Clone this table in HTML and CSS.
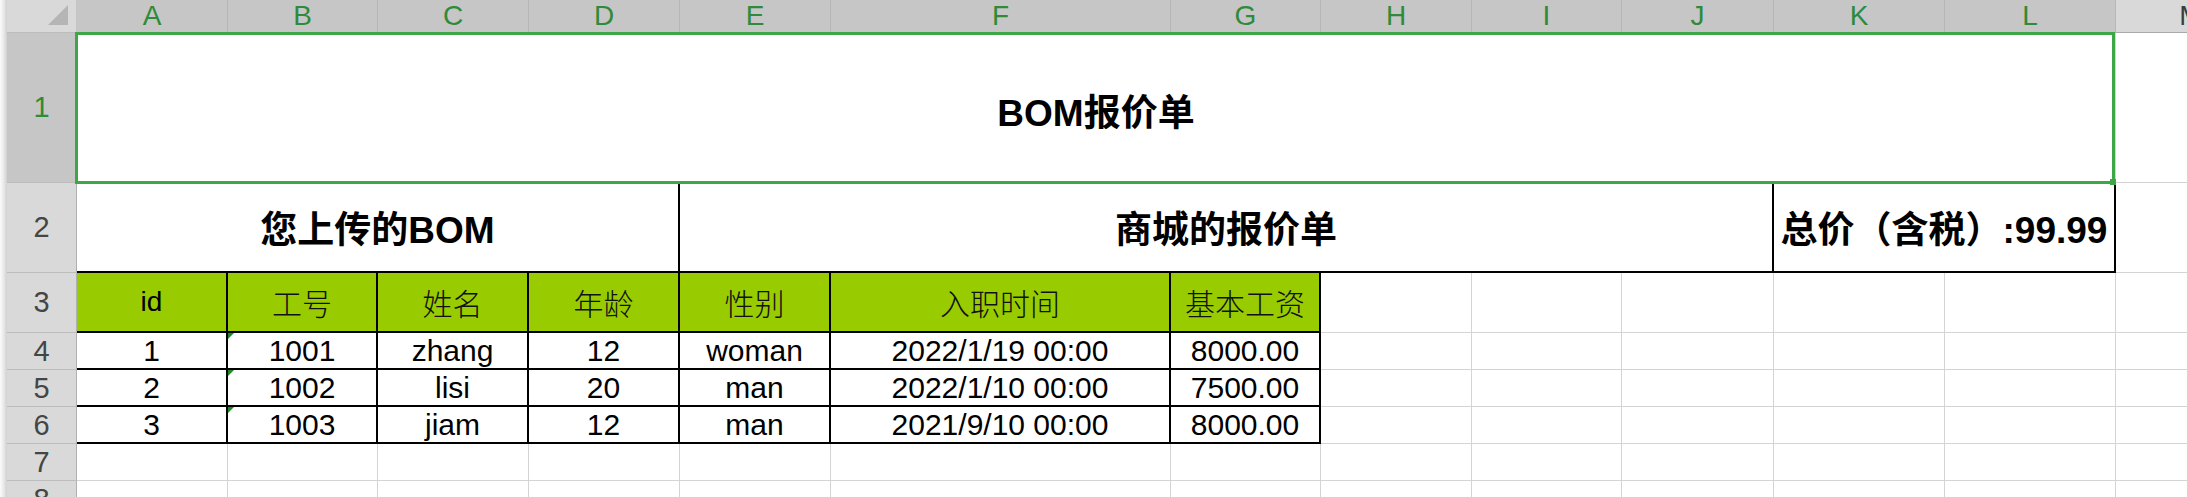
FILE: index.html
```html
<!DOCTYPE html>
<html lang="zh-CN">
<head>
<meta charset="utf-8">
<title>BOM报价单</title>
<link rel="stylesheet" href="styles.css">
</head>
<body>
<div class="sheet">
  <div class="strip"></div>
  <div class="corner"><svg class="tri" width="20" height="20" viewBox="0 0 20 20"><polygon points="20,0 20,20 0,20" fill="#b5b5b5"/></svg></div>
  <div class="ch">A</div><div class="ch">B</div><div class="ch">C</div><div class="ch">D</div><div class="ch">E</div><div class="ch">F</div><div class="ch">G</div><div class="ch">H</div><div class="ch">I</div><div class="ch">J</div><div class="ch">K</div><div class="ch">L</div><div class="ch off">M</div>

  <div class="rh sel">1</div>
  <div class="c t span12 selrange">BOM报价单</div>
  <div class="c"></div>

  <div class="rh">2</div>
  <div class="c b t span4">您上传的BOM</div>
  <div class="c b t span6">商城的报价单</div>
  <div class="c b t span2">总价（含税）:99.99</div>
  <div class="c"></div>

  <div class="rh">3</div>
  <div class="c b h">id</div>
  <div class="c b h zh">工号</div>
  <div class="c b h zh">姓名</div>
  <div class="c b h zh">年龄</div>
  <div class="c b h zh">性别</div>
  <div class="c b h zh">入职时间</div>
  <div class="c b h zh">基本工资</div>
  <div class="c"></div><div class="c"></div><div class="c"></div><div class="c"></div><div class="c"></div><div class="c"></div>

  <div class="rh">4</div>
  <div class="c b">1</div>
  <div class="c b flag">1001</div>
  <div class="c b">zhang</div>
  <div class="c b">12</div>
  <div class="c b">woman</div>
  <div class="c b">2022/1/19 00:00</div>
  <div class="c b">8000.00</div>
  <div class="c"></div><div class="c"></div><div class="c"></div><div class="c"></div><div class="c"></div><div class="c"></div>

  <div class="rh">5</div>
  <div class="c b">2</div>
  <div class="c b flag">1002</div>
  <div class="c b">lisi</div>
  <div class="c b">20</div>
  <div class="c b">man</div>
  <div class="c b">2022/1/10 00:00</div>
  <div class="c b">7500.00</div>
  <div class="c"></div><div class="c"></div><div class="c"></div><div class="c"></div><div class="c"></div><div class="c"></div>

  <div class="rh">6</div>
  <div class="c b">3</div>
  <div class="c b flag">1003</div>
  <div class="c b">jiam</div>
  <div class="c b">12</div>
  <div class="c b">man</div>
  <div class="c b">2021/9/10 00:00</div>
  <div class="c b">8000.00</div>
  <div class="c"></div><div class="c"></div><div class="c"></div><div class="c"></div><div class="c"></div><div class="c"></div>

  <div class="rh">7</div>
  <div class="c"></div><div class="c"></div><div class="c"></div><div class="c"></div><div class="c"></div><div class="c"></div><div class="c"></div><div class="c"></div><div class="c"></div><div class="c"></div><div class="c"></div><div class="c"></div><div class="c"></div>

  <div class="rh">8</div>
  <div class="c"></div><div class="c"></div><div class="c"></div><div class="c"></div><div class="c"></div><div class="c"></div><div class="c"></div><div class="c"></div><div class="c"></div><div class="c"></div><div class="c"></div><div class="c"></div><div class="c"></div>
</div>
</body>
</html>
```

FILE: styles.css
```css
* { box-sizing: border-box; }
html, body { margin: 0; padding: 0; background: #fff; overflow: hidden; }
body { font-family: "Liberation Sans", Arial, "Noto Sans CJK SC", sans-serif; }

.sheet {
  display: grid;
  grid-template-columns: 7px 70px 151px 150px 151px 151px 151px 340px 150px 151px 150px 152px 171px 171px 150px;
  grid-template-rows: 33px 150px 90px 60px repeat(5, 37px);
  width: max-content;
}

.strip {
  grid-column: 1;
  grid-row: 1 / span 9;
  background: linear-gradient(to right, #fbfbfb, #ececec 45%, #d0d0d0);
}

.corner {
  background: #d9d9d9;
  border-right: 1px solid #c4c4c4;
  border-bottom: 1px solid #bcbcbc;
  display: flex;
  align-items: flex-end;
  justify-content: flex-end;
  padding: 0 8px 7px 0;
}
.tri { display: block; }

.ch {
  display: flex;
  align-items: center;
  justify-content: center;
  font-size: 28px;
  color: #2f8a3a;
  background: #c6c6c6;
  border-right: 1px solid #b6b6b6;
  border-bottom: 1px solid #a9a9a9;
}
.ch.off {
  background: #d9d9d9;
  color: #3c3c3c;
  border-right: none;
}

.rh {
  display: flex;
  align-items: center;
  justify-content: center;
  font-size: 29px;
  color: #454545;
  background: #d9d9d9;
  border-right: 1px solid #b0b0b0;
  border-bottom: 1px solid #bdbdbd;
}
.rh.sel {
  background: #c6c6c6;
  color: #2f8a3a;
}

.c {
  position: relative;
  display: flex;
  align-items: center;
  justify-content: center;
  white-space: nowrap;
  font-size: 30px;
  color: #000;
  border-right: 1px solid #d4d4d4;
  border-bottom: 1px solid #d4d4d4;
}
.c.b {
  border-right: 2px solid #000;
  border-bottom: 2px solid #000;
}
.c.h {
  background: #99cc00;
  font-size: 28px;
}
.c.h.zh {
  font-family: "Noto Sans CJK SC", sans-serif;
  font-weight: 300;
  font-size: 30px;
  color: #111;
}
.c.t {
  font-family: "Liberation Sans", "Noto Sans CJK SC", sans-serif;
  font-weight: 700;
  font-size: 37px;
}

.span2 { grid-column: span 2; }
.span4 { grid-column: span 4; }
.span6 { grid-column: span 6; }
.span12 { grid-column: span 12; }

.selrange { padding-top: 4px; }
.selrange::after {
  content: "";
  position: absolute;
  top: -1px;
  left: -2px;
  right: 0;
  bottom: -2px;
  border: 3px solid #3fa648;
  z-index: 2;
  pointer-events: none;
}
.selrange::before {
  content: "";
  position: absolute;
  right: -1px;
  bottom: -3px;
  width: 6px;
  height: 6px;
  background: #3fa648;
  z-index: 3;
}

.flag::before {
  content: "";
  position: absolute;
  top: 0;
  left: 0;
  width: 0;
  height: 0;
  border-top: 6px solid #1f8a24;
  border-right: 6px solid transparent;
}
```
